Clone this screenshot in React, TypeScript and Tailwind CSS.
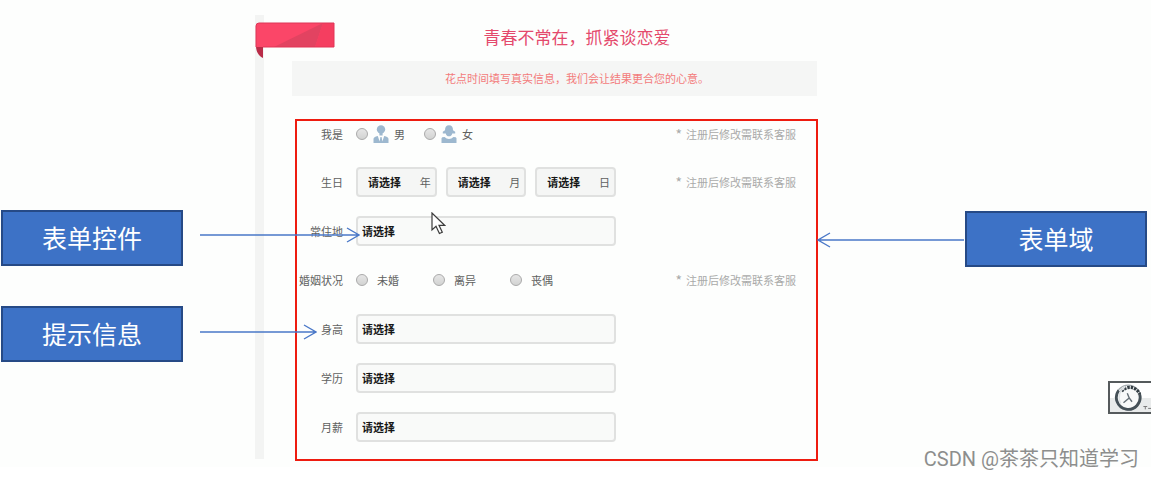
import React from "react";

const placeholder = "请选择";

function Callout({ children }: { children: React.ReactNode }) {
  return (
    <div className="flex h-14 w-[182px] items-center justify-center border-2 border-[#264a86] bg-[#3d72c6] pb-0.5 text-[25px] leading-none text-white">
      {children}
    </div>
  );
}

function Arrow({ length, className }: { length: number; className: string }) {
  return (
    <svg
      className={className}
      width={length}
      height="16"
      viewBox={`0 0 ${length} 16`}
      fill="none"
      stroke="#4a78c8"
      strokeWidth="1.4"
      aria-hidden="true"
    >
      <path d={`M0 8H${length - 1}M${length - 13} 1L${length - 1} 8L${length - 13} 15`} />
    </svg>
  );
}

function Ribbon() {
  return (
    <svg className="absolute left-0 top-[7px]" width="80" height="37" viewBox="0 0 80 37" aria-hidden="true">
      <path d="M1 24C1 30 4 34 8 36V25Z" fill="#b92c48" />
      <path d="M4 1H79V25H1V4Q1 1 4 1Z" fill="#fb4668" />
      <path d="M19 25L68 1L60 25Z" fill="#e24361" />
      <path d="M68 1H79V25H60Z" fill="#f53e60" />
      <path d="M1 25V4Q1 1 4 1H79" fill="none" stroke="#dd3657" />
      <path d="M79 1V25H8" fill="none" stroke="#e33556" />
    </svg>
  );
}

function ManIcon() {
  return (
    <svg width="16" height="18" viewBox="0 0 16 18" fill="#9db8cf" aria-hidden="true">
      <circle cx="8" cy="4.4" r="4.2" />
      <path d="M6.4 8H9.6V10.5H6.4Z" />
      <path d="M0.5 18V14Q0.5 12 4.8 11L6.6 16.5L7.4 12H8.6L9.4 16.5L11.2 11Q15.5 12 15.5 14V18Z" />
    </svg>
  );
}

function WomanIcon() {
  return (
    <svg width="16" height="18" viewBox="0 0 16 18" fill="#9db8cf" aria-hidden="true">
      <path d="M4 5.2Q4 0.3 8 0.3Q12 0.3 12 5.2L14.2 6.8V8.4H11.2Q10.8 11.2 8 11.2Q5.2 11.2 4.8 8.4H1.8V6.8Z" />
      <path d="M0.5 18V13.2Q0.5 12 3.5 12Q5.5 14 8 14Q10.5 14 12.5 12Q15.5 12 15.5 13.2V18Z" />
    </svg>
  );
}

function Radio({ name, label, icon, className }: { name: string; label: string; icon?: React.ReactNode; className: string }) {
  return (
    <label className={className}>
      <input
        type="radio"
        name={name}
        className="size-3 appearance-none rounded-full border border-[#aaaaaa] bg-linear-to-b from-[#e6e6e6] to-[#d2d3d2] checked:border-4 checked:border-[#3d72c6]"
      />
      {icon}
      <span>{label}</span>
    </label>
  );
}

function Row({ label, htmlFor, hint, short, children }: { label: string; htmlFor?: string; hint?: boolean; short?: boolean; children: React.ReactNode }) {
  return (
    <div className={short ? "mb-0.5 flex h-[25px] items-center" : "flex h-[30px] items-center"}>
      <div className="mr-[13px] w-[46px] shrink-0 whitespace-nowrap text-right">
        {htmlFor ? <label htmlFor={htmlFor}>{label}</label> : <span>{label}</span>}
      </div>
      <div className="w-[260px]">{children}</div>
      {hint && (
        <span className="ml-auto mr-5 flex gap-1 whitespace-nowrap text-[#a9aaa9]">
          <span className="text-sm leading-4">*</span> 注册后修改需联系客服
        </span>
      )}
    </div>
  );
}

function DatePart({ unit }: { unit: string }) {
  return (
    <label className="flex h-[30px] items-center rounded border-2 border-[#e0e1e0] bg-[#f5f6f5] pl-2.5 pr-1">
      <select className="min-w-0 flex-1 appearance-none bg-transparent font-bold text-[#161616] outline-none">
        <option>{placeholder}</option>
      </select>
      <span>{unit}</span>
    </label>
  );
}

function SelectField({ id }: { id: string }) {
  return (
    <select
      id={id}
      className="block h-[30px] w-full appearance-none rounded border-2 border-[#e0e1e0] bg-[#f9faf9] px-1 font-bold text-[#161616] outline-none"
    >
      <option>{placeholder}</option>
    </select>
  );
}

function SignupForm() {
  return (
    <form className="relative -mr-px ml-[3px] mt-[23px] flex flex-col gap-[19px] border-2 border-[#ee1c10] pb-[17px] text-[11px] leading-4 text-[#606160]">
      <Row label="我是" hint short>
        <div className="flex gap-[19px]">
          <Radio name="gender" label="男" icon={<ManIcon />} className="flex items-center gap-[5px]" />
          <Radio name="gender" label="女" icon={<WomanIcon />} className="flex items-center gap-[5px]" />
        </div>
      </Row>
      <Row label="生日" hint>
        <div className="grid grid-cols-3 gap-[9px]">
          <DatePart unit="年" />
          <DatePart unit="月" />
          <DatePart unit="日" />
        </div>
      </Row>
      <Row label="常住地" htmlFor="residence">
        <SelectField id="residence" />
      </Row>
      <Row label="婚姻状况" hint>
        <div className="flex">
          <Radio name="marriage" label="未婚" className="flex w-[77px] items-center gap-[9px]" />
          <Radio name="marriage" label="离异" className="flex w-[77px] items-center gap-[9px]" />
          <Radio name="marriage" label="丧偶" className="flex w-[77px] items-center gap-[9px]" />
        </div>
      </Row>
      <Row label="身高" htmlFor="height">
        <SelectField id="height" />
      </Row>
      <Row label="学历" htmlFor="education">
        <SelectField id="education" />
      </Row>
      <Row label="月薪" htmlFor="salary">
        <SelectField id="salary" />
      </Row>
      <svg className="pointer-events-none absolute left-[134px] top-[91px]" width="15" height="23" viewBox="0 0 15 23" aria-hidden="true">
        <path d="M1 1V18L5 14.3L8.4 21.5L11.3 20.2L8 13.3H13.6Z" fill="#fff" stroke="#3c3c3c" strokeWidth="1.2" />
      </svg>
    </form>
  );
}

function DialBadge() {
  return (
    <div className="absolute right-0 top-[381px] flex h-[33px] w-[43px] items-center overflow-hidden border-2 border-r-0 border-[#555a5c] bg-linear-to-b from-white from-50% to-[#e9ebeb] to-50% pl-1">
      <svg width="39" height="29" viewBox="0 0 39 29" fill="none" aria-hidden="true">
        <circle cx="15" cy="14.5" r="13" fill="#f8f9f9" stroke="#a3aaae" strokeWidth="1.4" />
        <path d="M5 7A12.5 12.5 0 1 0 27 11" stroke="#465158" strokeWidth="3" />
        <path d="M8 8A11 11 0 0 1 27 11" stroke="#343e44" strokeWidth="3.4" strokeDasharray="2.6 1" />
        <path d="M7 21Q2 10 12 3" stroke="#dfe3e5" strokeWidth="1.5" />
        <path d="M14 10L16 15L19 19M16 15L10 20" stroke="#667077" strokeWidth="1.5" />
        <path d="M31 24H35M33 24V27M36 26H39" stroke="#777" />
      </svg>
    </div>
  );
}

export default function App() {
  return (
    <div className="min-h-screen bg-white font-['Noto_Sans_CJK_SC','Liberation_Sans',sans-serif]">
      <main className="relative grid grid-cols-[255px_minmax(562px,1fr)_334px] bg-[#fdfefd] pb-1.5">
        <aside className="relative z-10 flex flex-col gap-10 pl-px pt-[210px]">
          <div className="relative">
            <Callout>表单控件</Callout>
            <Arrow length={160} className="pointer-events-none absolute left-[199px] top-[17px]" />
          </div>
          <div className="relative">
            <Callout>提示信息</Callout>
            <Arrow length={117} className="pointer-events-none absolute left-[199px] top-[18px]" />
          </div>
        </aside>

        <section className="relative mt-[15px] flex">
          <div className="mb-0.5 w-[9px] shrink-0 bg-[#f3f4f3]" />
          <Ribbon />
          <div className="flex-1 pl-7">
            <h1 className="pl-[45px] pt-2 text-center text-[17px] leading-7 text-[#e4496c]">青春不常在，抓紧谈恋爱</h1>
            <p className="mt-2.5 bg-[#f5f6f5] pl-[45px] text-center text-[11px] leading-[35px] text-[#f37b7b]">
              花点时间填写真实信息，我们会让结果更合您的心意。
            </p>
            <SignupForm />
          </div>
        </section>

        <aside className="flex items-start pt-[211px]">
          <div className="mt-[21px] flex-1">
            <Arrow length={147} className="rotate-180" />
          </div>
          <div className="mr-1">
            <Callout>表单域</Callout>
          </div>
        </aside>

        <DialBadge />
        <p className="absolute -bottom-2 right-3 font-[Roboto,'Noto_Sans_CJK_SC',sans-serif] text-xl leading-8 text-[#8d8e8d]">
          CSDN @茶茶只知道学习
        </p>
      </main>
    </div>
  );
}
